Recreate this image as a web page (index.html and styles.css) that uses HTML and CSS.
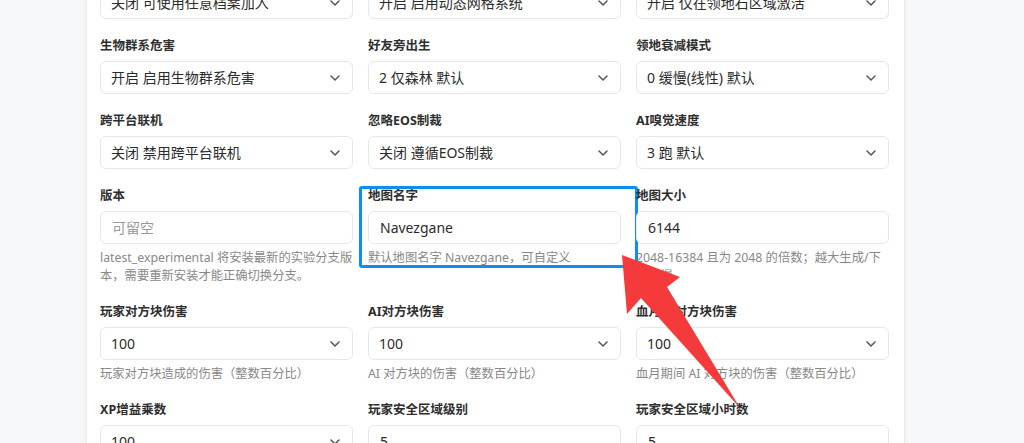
FILE: index.html
```html
<!DOCTYPE html>
<html lang="zh-CN">
<head>
    <meta charset="UTF-8">
    <meta name="viewport" content="width=device-width, initial-scale=1.0">
    <title>服务器设置</title>
    <link rel="stylesheet" href="styles.css">
</head>
<body>
    <div class="page">
        <div class="card">
            <div class="grid">
                <!-- 第一行（已滚动到上方） -->
                <div class="field">
                    <label>好友加入</label>
                    <div class="select-wrap">
                        <select class="control"><option>关闭 可使用任意档案加入</option></select>
                        <svg class="chev" viewBox="0 0 10 6"><path d="M1 1l4 4 4-4"/></svg>
                    </div>
                </div>
                <div class="field">
                    <label>动态网格</label>
                    <div class="select-wrap">
                        <select class="control"><option>开启 启用动态网格系统</option></select>
                        <svg class="chev" viewBox="0 0 10 6"><path d="M1 1l4 4 4-4"/></svg>
                    </div>
                </div>
                <div class="field">
                    <label>动态网格领地</label>
                    <div class="select-wrap">
                        <select class="control"><option>开启 仅在领地石区域激活</option></select>
                        <svg class="chev" viewBox="0 0 10 6"><path d="M1 1l4 4 4-4"/></svg>
                    </div>
                </div>

                <div class="field">
                    <label>生物群系危害</label>
                    <div class="select-wrap">
                        <select class="control"><option>开启 启用生物群系危害</option></select>
                        <svg class="chev" viewBox="0 0 10 6"><path d="M1 1l4 4 4-4"/></svg>
                    </div>
                </div>
                <div class="field">
                    <label>好友旁出生</label>
                    <div class="select-wrap">
                        <select class="control"><option>2 仅森林 默认</option></select>
                        <svg class="chev" viewBox="0 0 10 6"><path d="M1 1l4 4 4-4"/></svg>
                    </div>
                </div>
                <div class="field">
                    <label>领地衰减模式</label>
                    <div class="select-wrap">
                        <select class="control"><option>0 缓慢(线性) 默认</option></select>
                        <svg class="chev" viewBox="0 0 10 6"><path d="M1 1l4 4 4-4"/></svg>
                    </div>
                </div>

                <div class="field">
                    <label>跨平台联机</label>
                    <div class="select-wrap">
                        <select class="control"><option>关闭 禁用跨平台联机</option></select>
                        <svg class="chev" viewBox="0 0 10 6"><path d="M1 1l4 4 4-4"/></svg>
                    </div>
                </div>
                <div class="field">
                    <label>忽略EOS制裁</label>
                    <div class="select-wrap">
                        <select class="control"><option>关闭 遵循EOS制裁</option></select>
                        <svg class="chev" viewBox="0 0 10 6"><path d="M1 1l4 4 4-4"/></svg>
                    </div>
                </div>
                <div class="field">
                    <label>AI嗅觉速度</label>
                    <div class="select-wrap">
                        <select class="control"><option>3 跑 默认</option></select>
                        <svg class="chev" viewBox="0 0 10 6"><path d="M1 1l4 4 4-4"/></svg>
                    </div>
                </div>

                <div class="field">
                    <label>版本</label>
                    <input class="control input" type="text" placeholder="可留空">
                    <p class="hint">latest_experimental 将安装最新的实验分支版本，需要重新安装才能正确切换分支。</p>
                </div>
                <div class="field">
                    <label>地图名字</label>
                    <input class="control input" type="text" value="Navezgane">
                    <p class="hint">默认地图名字 Navezgane，可自定义</p>
                    <div class="highlight"></div> <!-- 标注框 -->
                </div>
                <div class="field">
                    <label>地图大小</label>
                    <input class="control input" type="text" value="6144">
                    <p class="hint">2048-16384 且为 2048 的倍数；越大生成/下载越慢</p>
                </div>

                <div class="field">
                    <label>玩家对方块伤害</label>
                    <div class="select-wrap">
                        <select class="control"><option>100</option></select>
                        <svg class="chev" viewBox="0 0 10 6"><path d="M1 1l4 4 4-4"/></svg>
                    </div>
                    <p class="hint">玩家对方块造成的伤害（整数百分比）</p>
                </div>
                <div class="field">
                    <label>AI对方块伤害</label>
                    <div class="select-wrap">
                        <select class="control"><option>100</option></select>
                        <svg class="chev" viewBox="0 0 10 6"><path d="M1 1l4 4 4-4"/></svg>
                    </div>
                    <p class="hint">AI 对方块的伤害（整数百分比）</p>
                </div>
                <div class="field">
                    <label>血月AI对方块伤害</label>
                    <div class="select-wrap">
                        <select class="control"><option>100</option></select>
                        <svg class="chev" viewBox="0 0 10 6"><path d="M1 1l4 4 4-4"/></svg>
                    </div>
                    <p class="hint">血月期间 AI 对方块的伤害（整数百分比）</p>
                </div>

                <div class="field">
                    <label>XP增益乘数</label>
                    <div class="select-wrap">
                        <select class="control"><option>100</option></select>
                        <svg class="chev" viewBox="0 0 10 6"><path d="M1 1l4 4 4-4"/></svg>
                    </div>
                </div>
                <div class="field">
                    <label>玩家安全区域级别</label>
                    <input class="control input" type="text" value="5">
                </div>
                <div class="field">
                    <label>玩家安全区域小时数</label>
                    <input class="control input" type="text" value="5">
                </div>
            </div>
        </div>
    </div>

    <!-- 标注箭头 -->
    <svg class="arrow" viewBox="0 0 1024 443">
        <polygon points="622,255 680,277 667,287 740,408 641,298 627,314"/>
    </svg>
</body>
</html>
```

FILE: styles.css
```css
* {
    box-sizing: border-box;
}
body {
    margin: 0;
    background: #f7f8fa;
    font-family: "Noto Sans", "Noto Sans CJK SC", sans-serif;
    color: #333;
    position: relative;
    height: 443px;
    overflow: hidden;
}
.page {
    height: 443px;
    overflow: hidden;
}
.card {
    margin-top: -41px;
    margin-left: 86px;
    width: 819px;
    min-height: 600px;
    background: #fff;
    border-left: 1px solid #e8eaed;
    border-right: 1px solid #e8eaed;
    box-shadow: 0 0 6px rgba(0, 0, 0, 0.04);
    padding: 0 15px 0 13px;
}
.grid {
    display: grid;
    grid-template-columns: repeat(3, 1fr);
    column-gap: 15px;
    row-gap: 15px;
}
.field {
    display: flex;
    flex-direction: column;
    position: relative;
    min-width: 0;
}
label {
    font-size: 12.5px;
    font-weight: bold;
    line-height: 20px;
    padding-top: 2px;
    margin-bottom: 5px;
    color: #2e2e2e;
}
.select-wrap {
    position: relative;
}
.control {
    display: block;
    width: 100%;
    height: 33px;
    border: 1px solid #e5e7eb;
    border-radius: 6px;
    background: #fff;
    font-family: inherit;
    font-size: 14px;
    color: #2b2b2b;
    padding: 0 30px 0 10px;
    margin: 0;
    outline: none;
    appearance: none;
    -webkit-appearance: none;
}
.input {
    padding: 0 11px;
}
.input::placeholder {
    color: #9a9a9a;
}
.chev {
    position: absolute;
    right: 13px;
    top: 14px;
    width: 10px;
    height: 6px;
    fill: none;
    stroke: #555;
    stroke-width: 1.5;
    stroke-linecap: round;
    stroke-linejoin: round;
}
.hint {
    margin: 5px 0 0;
    font-size: 12.3px;
    line-height: 18px;
    color: #888;
}
.highlight {
    position: absolute;
    left: -9px;
    top: 2px;
    width: 279px;
    height: 82px;
    border: 3px solid #0b8ef5;
    border-radius: 3px;
}
.arrow {
    position: absolute;
    left: 0;
    top: 0;
    width: 1024px;
    height: 443px;
    pointer-events: none;
}
.arrow polygon {
    fill: #f43a3a;
}
```
